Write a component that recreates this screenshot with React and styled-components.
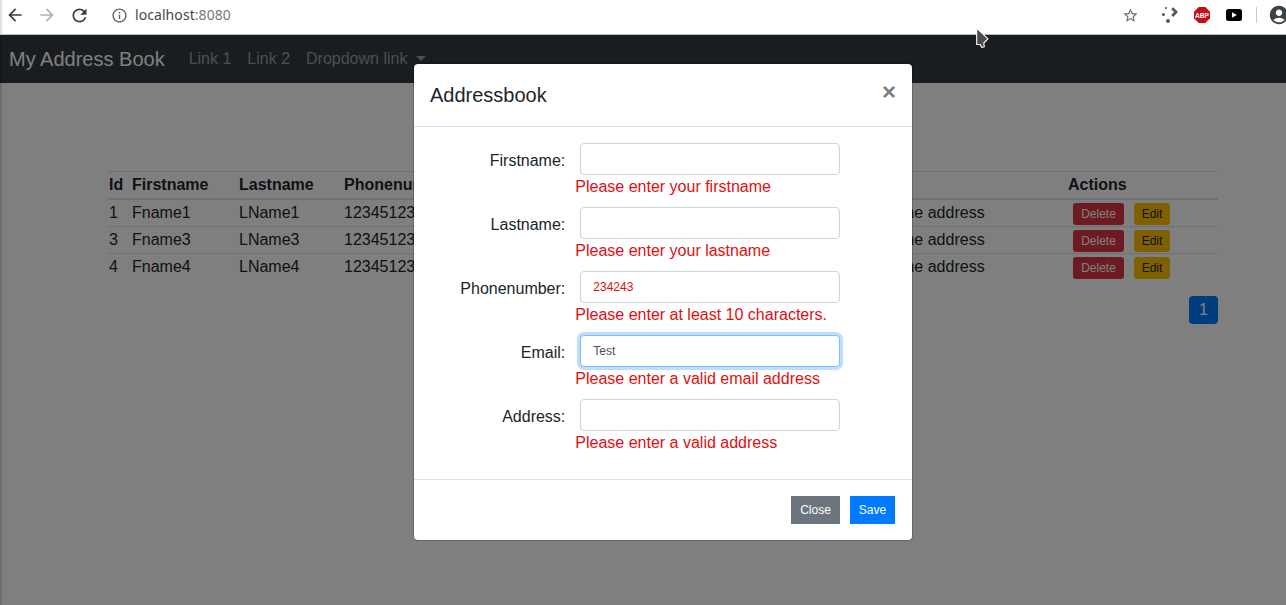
import React from "react";
import styled, { createGlobalStyle, css } from "styled-components";
import { MdArrowBack, MdArrowForward, MdRefresh, MdInfoOutline, MdStarBorder, MdAccountCircle } from "react-icons/md";

const GlobalStyle = createGlobalStyle`
  *, *::before, *::after { box-sizing: border-box; }
  body {
    margin: 0;
    overflow: hidden;
    font-family: "Liberation Sans", Arial, sans-serif;
    font-size: 16px;
    line-height: 1.5;
    color: #212529;
    background: #fff;
  }
`;

const Window = styled.div`
  display: flex;
  flex-direction: column;
  height: 605px;
  width: 1286px;
  overflow: hidden;
  position: relative;
`;

const BrowserBar = styled.header`
  display: flex;
  align-items: flex-start;
  justify-content: space-between;
  height: 35px;
  flex: none;
  background: #fff;
  border-bottom: 1px solid #b9bfc0;
  box-shadow: inset 3px 0 3px -2px rgba(0, 0, 0, 0.2);
`;

const BarGroup = styled.div`
  display: flex;
  align-items: center;
  height: 30px;
  flex: none;
`;

const NavGroup = styled(BarGroup)`
  padding-left: 5px;
`;

const ExtensionGroup = styled(BarGroup)`
  margin-right: -4px;
`;

const BarIcon = styled.span`
  display: flex;
  color: ${(p) => p.$color || "#3c4245"};
  margin-left: ${(p) => p.$gap || 0}px;
  svg { display: block; }
`;

const Url = styled.span`
  margin-left: 7px;
  font: 14px/20px "Noto Sans", sans-serif;
  letter-spacing: 0.07px;
  color: #43494d;
  span { color: #757a7d; }
`;

const Divider = styled.span`
  width: 1px;
  height: 16px;
  margin: 0 11px 0 14px;
  background: #c9ccce;
`;

const Viewport = styled.main`
  flex: 1;
  position: relative;
  overflow: hidden;
  background: #fff;
`;

const Navbar = styled.nav`
  display: flex;
  align-items: center;
  height: 48px;
  padding-left: 9px;
  background: #343a40;
`;

const Brand = styled.span`
  margin-right: 16px;
  font-size: 20px;
  line-height: 30px;
  color: #fff;
`;

const NavLink = styled.span`
  display: flex;
  align-items: center;
  padding: 0 8px;
  color: rgba(255, 255, 255, 0.5);
`;

const Caret = styled.i`
  margin: 0 0 2px 9px;
  border: 5px solid transparent;
  border-top-color: currentColor;
  border-bottom: 0;
`;

const Container = styled.section`
  width: 1110px;
  margin: 88px 0 0 108px;
`;

const Table = styled.table`
  width: 100%;
  border-collapse: separate;
  border-spacing: 0;
  table-layout: fixed;
`;

const HeadCell = styled.th`
  height: 29px;
  padding: 0 1px 1px;
  line-height: 24px;
  text-align: left;
  vertical-align: middle;
  border-top: 1px solid #dee2e6;
  border-bottom: 2px solid #dee2e6;
`;

const Cell = styled.td`
  height: ${(p) => (p.$first ? 26 : 27)}px;
  padding: 1px 1px 0;
  line-height: 24px;
  vertical-align: top;
  border-top: ${(p) => (p.$first ? "0" : "1px solid #dee2e6")};
`;

const ActionBar = styled.div`
  display: flex;
  gap: 10px;
  height: 24px;
  padding: 2px 0 0 5px;
`;

const tones = {
  danger: css`background: #dc3545; color: #fff;`,
  warning: css`background: #ffc107; color: #212529;`,
  secondary: css`background: #6c757d; color: #fff;`,
  primary: css`background: #007bff; color: #fff;`,
};

const Button = styled.button`
  display: flex;
  align-items: center;
  justify-content: center;
  flex: none;
  width: ${(p) => p.$width}px;
  height: 22px;
  padding: 0;
  border: 0;
  border-radius: 3px;
  font: 12px/18px "Liberation Sans", Arial, sans-serif;
  ${(p) => tones[p.$tone]}
`;

const DialogButton = styled(Button)`
  height: 28px;
  border-radius: 0;
`;

const Pagination = styled.div`
  display: flex;
  justify-content: flex-end;
  margin-top: 16px;
`;

const PageLink = styled.span`
  width: 29px;
  height: 28px;
  border-radius: 4px;
  line-height: 27px;
  text-align: center;
  color: #fff;
  background: #007bff;
`;

const Backdrop = styled.div`
  position: absolute;
  inset: 0;
  padding: 28px 0 0 413px;
  background: rgba(0, 0, 0, 0.5);
  box-shadow: inset 3px 0 3px -2px rgba(0, 0, 0, 0.25);
`;

const Dialog = styled.div`
  width: 500px;
  background: #fff;
  background-clip: padding-box;
  border: 1px solid rgba(0, 0, 0, 0.2);
  border-radius: 5px;
`;

const DialogHeader = styled.div`
  display: flex;
  justify-content: space-between;
  height: 63px;
  padding: 16px;
  border-bottom: 1px solid #dee2e6;
`;

const DialogTitle = styled.h5`
  margin: 0;
  font-size: 20px;
  font-weight: 400;
  line-height: 30px;
`;

const CloseMark = styled.span`
  font-size: 24px;
  font-weight: 700;
  line-height: 24px;
  color: #808080;
`;

const DialogBody = styled.div`
  padding: 16px 16px 16px 11.3px;
`;

const Field = styled.div`
  display: grid;
  grid-template-columns: 140px 275px;
  column-gap: 10px;
  height: 64px;
`;

const Label = styled.label`
  padding-top: 6px;
  line-height: 24px;
  text-align: right;
`;

const Input = styled.input`
  display: block;
  width: 260px;
  height: 32px;
  margin: 0 0 0 5px;
  padding: 4px 12px 5px;
  border: 1px solid ${(p) => (p.$focused ? "#80bdff" : "#ced4da")};
  border-radius: 4px;
  outline: 0;
  background: #fff;
  font: 12px/18px "Liberation Sans", Arial, sans-serif;
  color: ${(p) => (p.$invalid ? "#e01010" : "#495057")};
  box-shadow: ${(p) => (p.$focused ? "0 0 0 3px rgba(0, 123, 255, 0.25)" : "none")};
`;

const FieldError = styled.div`
  line-height: 24px;
  color: #e01010;
  white-space: nowrap;
`;

const DialogFooter = styled.div`
  display: flex;
  justify-content: flex-end;
  gap: 10px;
  height: 61px;
  padding: 16px 17px 16px 16px;
  border-top: 1px solid #dee2e6;
`;

const Pointer = styled.svg`
  position: absolute;
  left: 975px;
  top: 27px;
`;

const people = [
  { id: 1, first: "Fname1", last: "LName1" },
  { id: 3, first: "Fname3", last: "LName3" },
  { id: 4, first: "Fname4", last: "LName4" },
];

const fields = [
  { label: "Firstname:", error: "Please enter your firstname" },
  { label: "Lastname:", error: "Please enter your lastname" },
  { label: "Phonenumber:", value: "234243", invalid: true, error: "Please enter at least 10 characters." },
  { label: "Email:", value: "Test", focused: true, error: "Please enter a valid email address" },
  { label: "Address:", error: "Please enter a valid address" },
];

const columns = [
  ["Id", 23],
  ["Firstname", 107],
  ["Lastname", 105],
  ["Phonenumber", 200],
  ["Email", 293],
  ["Address", 231],
  ["Actions", 151],
];

function DotsIcon() {
  return (
    <svg width="18" height="18" viewBox="0 0 18 18" fill="#55585a">
      <circle cx="6" cy="1.9" r="1" />
      <circle cx="3.4" cy="8.5" r="1.5" />
      <circle cx="8" cy="15.1" r="2" />
      <path d="M12.2 2.2 16 6.1 12.2 10" fill="none" stroke="#55585a" strokeWidth="2.8" />
    </svg>
  );
}

function AbpIcon() {
  return (
    <svg width="16" height="16" viewBox="0 0 16 16">
      <path d="M4.7 0h6.6L16 4.7v6.6L11.3 16H4.7L0 11.3V4.7z" fill="#c70d13" />
      <text x="1" y="10.7" textLength="14" lengthAdjust="spacingAndGlyphs" fontFamily="Liberation Sans" fontWeight="700" fontSize="7.6" fill="#fff">ABP</text>
    </svg>
  );
}

function VideoIcon() {
  return (
    <svg width="16" height="12" viewBox="0 0 16 12">
      <rect width="16" height="12" rx="2.5" fill="#000" />
      <path d="M6 3.2 10.8 6 6 8.8z" fill="#fff" />
    </svg>
  );
}

export default function App() {
  return (
    <Window>
      <GlobalStyle />
      <BrowserBar>
        <NavGroup>
          <BarIcon><MdArrowBack size={20} /></BarIcon>
          <BarIcon $gap={12} $color="#afb1b3"><MdArrowForward size={20} /></BarIcon>
          <BarIcon $gap={11.5}><MdRefresh size={21} /></BarIcon>
          <BarIcon $gap={21.5} $color="#5f6467"><MdInfoOutline size={17} /></BarIcon>
          <Url>localhost<span>:8080</span></Url>
        </NavGroup>
        <ExtensionGroup>
          <BarIcon $color="#6a6e72"><MdStarBorder size={17} /></BarIcon>
          <BarIcon $gap={21}><DotsIcon /></BarIcon>
          <BarIcon $gap={16}><AbpIcon /></BarIcon>
          <BarIcon $gap={16}><VideoIcon /></BarIcon>
          <Divider />
          <BarIcon><MdAccountCircle size={22} /></BarIcon>
        </ExtensionGroup>
      </BrowserBar>
      <Viewport>
        <Navbar>
          <Brand>My Address Book</Brand>
          <NavLink>Link 1</NavLink>
          <NavLink>Link 2</NavLink>
          <NavLink>Dropdown link<Caret /></NavLink>
        </Navbar>
        <Container>
          <Table>
            <colgroup>
              {columns.map(([name, width]) => <col key={name} width={width} />)}
            </colgroup>
            <thead>
              <tr>{columns.map(([name]) => <HeadCell key={name}>{name}</HeadCell>)}</tr>
            </thead>
            <tbody>
              {people.map((p, i) => (
                <tr key={p.id}>
                  {[p.id, p.first, p.last, "1234512345", "test@test.com", "Some home address"].map((v, n) => (
                    <Cell key={n} $first={i === 0}>{v}</Cell>
                  ))}
                  <Cell $first={i === 0}>
                    <ActionBar>
                      <Button $tone="danger" $width={51}>Delete</Button>
                      <Button $tone="warning" $width={36}>Edit</Button>
                    </ActionBar>
                  </Cell>
                </tr>
              ))}
            </tbody>
          </Table>
          <Pagination><PageLink>1</PageLink></Pagination>
        </Container>
        <Backdrop>
          <Dialog role="dialog">
            <DialogHeader>
              <DialogTitle>Addressbook</DialogTitle>
              <CloseMark>×</CloseMark>
            </DialogHeader>
            <DialogBody>
              {fields.map((f) => (
                <Field key={f.label}>
                  <Label>{f.label}</Label>
                  <div>
                    <Input readOnly value={f.value || ""} $invalid={f.invalid} $focused={f.focused} />
                    <FieldError>{f.error}</FieldError>
                  </div>
                </Field>
              ))}
            </DialogBody>
            <DialogFooter>
              <DialogButton $tone="secondary" $width={49}>Close</DialogButton>
              <DialogButton $tone="primary" $width={45}>Save</DialogButton>
            </DialogFooter>
          </Dialog>
        </Backdrop>
      </Viewport>
      <Pointer width="15" height="22" viewBox="0 0 15 22">
        <path d="M1.7 1V17.5H5.2L6.8 20.5L9.3 19.8L8.8 16L13 11.8Z" fill="#4a4a4a" stroke="#fff" strokeWidth="1.1" strokeLinejoin="round" />
      </Pointer>
    </Window>
  );
}
